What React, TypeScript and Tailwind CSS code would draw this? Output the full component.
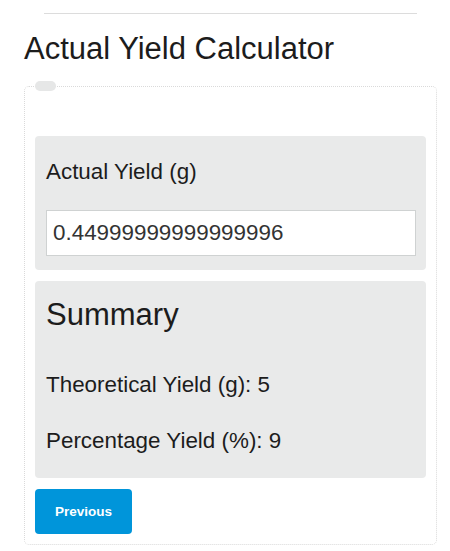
import React from 'react';

const font = { fontFamily: '"Liberation Sans", Arial, sans-serif' };

const App: React.FC = () => {
  return (
    <div className="min-h-[551px] w-[450px] bg-white pl-[24px] pt-[13px] text-[#1c1c1c]" style={font}>
      {/* Top rule */}
      <div className="ml-[20px] h-px w-[373px] bg-[#dcdcdc]" />

      <h1 className="mt-[19px] text-[31px] font-normal leading-none">Actual Yield Calculator</h1>

      {/* Calculator card */}
      <div className="relative mt-[22px] w-[413px] rounded-[5px] border border-dotted border-[#dadada] px-[10px] pt-[49px] pb-[10px]">
        <span className="absolute -top-[6px] left-[10px] h-[10px] w-[21px] rounded-full bg-[#e6e7e7]" />

        <div className="rounded-[4px] bg-[#e9eaea] pt-[25px] pr-[10px] pb-[14px] pl-[11px]">
          <label className="block text-[22.4px] leading-none">Actual Yield (g)</label>
          <input
            readOnly
            value="0.44999999999999996"
            className="mt-[27px] block h-[46px] w-[370px] border border-[#cfd2d2] bg-white pl-[6px] text-[22.4px] text-[#333] outline-none"
            style={font}
          />
        </div>

        <div className="mt-[11px] h-[197px] rounded-[4px] bg-[#e9eaea] pt-[18px] pl-[11px]">
          <h3 className="text-[31px] font-normal leading-none">Summary</h3>
          <p className="mt-[44px] text-[22.4px] leading-none">Theoretical Yield (g): 5</p>
          <p className="mt-[33px] text-[22.4px] leading-none">Percentage Yield (%): 9</p>
        </div>

        <button className="mt-[11px] flex h-[45px] w-[97px] items-center justify-center rounded-[4px] bg-[#0095da] text-[13.5px] font-bold text-white">
          Previous
        </button>
      </div>
    </div>
  );
};

export default App;
